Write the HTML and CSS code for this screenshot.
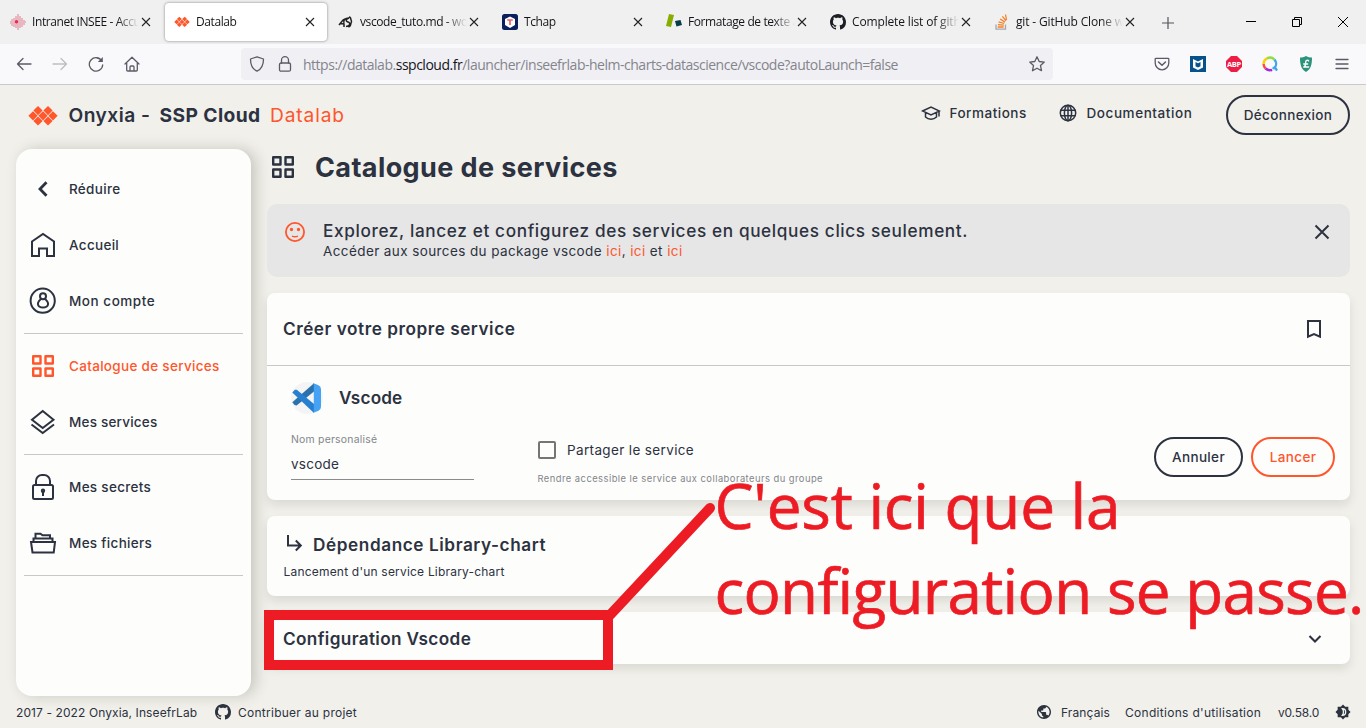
FILE: index.html
```
<!DOCTYPE html>
<html lang="fr">
<head>
<meta charset="utf-8">
<title>Datalab</title>
<link rel="stylesheet" href="styles.css">
</head>
<body>
<svg class="defs" width="0" height="0">
  <symbol id="x" viewBox="0 0 10 10"><path d="M1 1l8 8M9 1l-8 8" fill="none" stroke="#222" stroke-width="1.1"/></symbol>
  <symbol id="onyxia" viewBox="0 0 30 20"><path d="M10 0l4.600 4.600-4.600 4.600-4.600-4.600zM20 0l4.600 4.600-4.600 4.600-4.600-4.600zM5 5.200l4.600 4.600-4.600 4.600-4.600-4.600zM15 5.200l4.600 4.600-4.600 4.600-4.600-4.600zM25 5.200l4.600 4.600-4.600 4.600-4.600-4.600zM10 10.400l4.600 4.600-4.600 4.600-4.600-4.600zM20 10.400l4.600 4.600-4.600 4.600-4.600-4.600z" fill="#ff562c"/></symbol>
  <symbol id="github" viewBox="0 0 16 16"><path fill-rule="evenodd" d="M8 0C3.580 0 0 3.580 0 8c0 3.540 2.290 6.530 5.470 7.590.4.070.55-.17.55-.38 0-.19-.01-.82-.01-1.490-2.010.37-2.530-.49-2.690-.94-.09-.23-.48-.94-.82-1.130-.28-.15-.68-.52-.01-.53.63-.01 1.080.58 1.230.82.72 1.210 1.870.87 2.330.66.07-.52.28-.87.51-1.070-1.780-.2-3.640-.89-3.640-3.950 0-.87.31-1.590.82-2.150-.08-.2-.36-1.020.08-2.120 0 0 .67-.21 2.200.82.64-.18 1.320-.27 2-.27s1.360.09 2 .27c1.530-1.040 2.200-.82 2.200-.82.44 1.100.16 1.920.08 2.120.51.56.82 1.270.82 2.150 0 3.070-1.870 3.750-3.650 3.950.29.25.54.73.54 1.480 0 1.070-.01 1.930-.01 2.200 0 .21.15.46.55.38A8.010 8.010 0 0016 8c0-4.420-3.580-8-8-8z"/></symbol>
  <symbol id="grid" viewBox="0 0 24 24"><path d="M2.200 2.200h7.300v7.300H2.200zM14.500 2.200h7.300v7.300h-7.300zM2.200 14.500h7.300v7.300H2.200zM14.500 14.500h7.300v7.300h-7.300z" fill="none" stroke="currentColor" stroke-width="2.400" stroke-linejoin="round"/></symbol>
</svg>

<header class="tabs">
  <div class="tab">
    <svg class="fav" viewBox="0 0 16 16"><path d="M0 7v3M2 5v7M4 4v9M6 2v12M8 0v16M10 2v12M12 4v9M14 6v5M16 7v2" stroke="#e09aa8" stroke-width="1.300"/><path d="M3 6h10M5 4h6M3 10h10M5 12h6" stroke="#e5b4bf" stroke-width=".7"/><circle cx="6.500" cy="7.700" r="1.700" fill="#f0274a"/></svg>
    <span class="tab-label">Intranet INSEE - Accueil</span><svg class="close"><use href="#x"/></svg>
  </div>
  <div class="tab active">
    <svg class="fav" viewBox="0 0 30 20"><use href="#onyxia"/></svg>
    <span class="tab-label">Datalab</span><svg class="close"><use href="#x"/></svg>
  </div>
  <div class="tab">
    <svg class="fav" viewBox="0 0 16 16"><path d="M1 11l4-5 2-1M2 9.500l4 .5v3M6 9c-1-3 1-5 5-5-3 1-4 3-1 4 3 1 2 4-2 4.500M11 3c3 0 1 4 3 4.500-2 .5 0 5-3.500 5.500" fill="none" stroke="#222" stroke-width="1.500"/></svg>
    <span class="tab-label">vscode_tuto.md - work</span><svg class="close"><use href="#x"/></svg>
  </div>
  <div class="tab">
    <svg class="fav" viewBox="0 0 16 16"><rect width="16" height="16" rx="2.500" fill="#0b1f5c"/><path d="M8 2.500l5 2.500v6l-5 3-5-3V5z" fill="#fff"/><path d="M5.200 6h5.600M8 6v5" stroke="#f0616d" stroke-width="1.700"/></svg>
    <span class="tab-label">Tchap</span><svg class="close"><use href="#x"/></svg>
  </div>
  <div class="tab">
    <svg class="fav" viewBox="0 0 16 16"><path d="M3 0l5 1-3 12-5-1z" fill="#86ad00"/><path d="M9 7l5.500-1L16 11l-5.500 1.500z" fill="#073d48"/></svg>
    <span class="tab-label">Formatage de texte avec</span><svg class="close"><use href="#x"/></svg>
  </div>
  <div class="tab">
    <svg class="fav" viewBox="0 0 16 16" fill="#1b1f24"><use href="#github"/></svg>
    <span class="tab-label tab-wide">Complete list of github</span><svg class="close"><use href="#x"/></svg>
  </div>
  <div class="tab">
    <svg class="fav" viewBox="0 0 16 16" fill="none"><path d="M2 10.500v4.700h9.500v-4.700" stroke="#a3a8ad" stroke-width="1.300"/><path d="M3.700 13h6M3.900 10.600l5.900.6M4.600 7.800l5.600 1.700M6.100 5l4.900 3.100M8.400 2.300l3.600 4.500M11.500.5l1 5.500" stroke="#f48024" stroke-width="1.300"/></svg>
    <span class="tab-label tab-wide">git - GitHub Clone with</span><svg class="close"><use href="#x"/></svg>
  </div>
  <svg class="plus" viewBox="0 0 12 12"><path d="M6 0v12M0 6h12" stroke="#55555c" stroke-width="1.200"/></svg>
  <div class="window">
    <svg viewBox="0 0 10 10"><path d="M0 4.500h10" stroke="#000"/></svg>
    <svg viewBox="0 0 10 10" fill="none" stroke="#000"><path d="M.5 2.500h7v7h-7zM2.500 2.500v-2h7v7h-2"/></svg>
    <svg viewBox="0 0 10 10"><path d="M0 0l10 10M10 0L0 10" stroke="#000"/></svg>
  </div>
</header>

<nav class="toolbar">
  <div class="nav-buttons">
    <svg viewBox="0 0 16 16"><path d="M15 8H1.500M7 2.500L1.500 8 7 13.500"/></svg>
    <svg viewBox="0 0 16 16" class="dim"><path d="M1 8h13.500M9 2.500L14.500 8 9 13.500"/></svg>
    <svg viewBox="0 0 16 16"><path d="M13.800 5A6.700 6.700 0 1 0 14.700 9"/><path d="M14.800 1v5h-5z" fill="#5b5b66" stroke="none"/></svg>
    <svg viewBox="0 0 16 16"><path d="M1 8l7-6.700L15 8M2.700 7v7q0 1 1 1h8.600q1 0 1-1V7M6 15v-4q0-1 1-1h2q1 0 1 1v4"/></svg>
  </div>
  <div class="urlbar">
    <svg viewBox="0 0 16 16"><path d="M8 .8l6.500 2.200c0 5.500-1.500 10-6.500 12.200C3 13 1.500 8.500 1.500 3z"/></svg>
    <svg viewBox="0 0 16 16"><rect x="2.500" y="7" width="11" height="8.200" rx="1.500"/><path d="M4.500 7V4.200a3.500 3.500 0 0 1 7 0V7"/></svg>
    <span class="url">https://datalab.<b>sspcloud.fr</b>/launcher/inseefrlab-helm-charts-datascience/vscode?autoLaunch=false</span>
    <svg class="star" viewBox="0 0 16 16"><path d="M8 .8l2.200 4.700 5.100.6-3.800 3.500 1 5.100L8 12.200l-4.500 2.500 1-5.100L.7 6.100l5.100-.6z"/></svg>
  </div>
  <div class="extensions">
    <svg viewBox="0 0 16 16"><path d="M2 2.300h12q.8 0 .8.800V7A6.800 6.800 0 0 1 1.200 7V3.100q0-.8.800-.8z"/><path d="M4.500 6L8 9.300 11.500 6" stroke-width="1.500"/></svg>
    <svg viewBox="0 0 16 16"><path d="M0 0h16v16H0z" fill="#07528b" stroke="none"/><path d="M3 3l5 2.500L13 3v8.500L8 14l-5-2.500z" fill="#fff" stroke="none"/><path d="M5.500 6L8 7.300 10.500 6v4.300L8 11.500l-2.500-1.200z" fill="#07528b" stroke="none"/></svg>
    <svg viewBox="0 0 16 16"><path d="M5 0h6l5 5v6l-5 5H5l-5-5V5z" fill="#ed1e45" stroke="none"/><text x="8" y="10.700" class="abp">ABP</text></svg>
    <svg viewBox="0 0 16 16"><path d="M1.600 8A6.300 6.300 0 0 1 5 2.400" stroke="#ffce00"/><path d="M5 2.400a6.300 6.300 0 0 1 7.500 1.200" stroke="#8fe03c"/><path d="M12.500 3.600A6.300 6.300 0 0 1 12.500 12M10.500 12l3 .2 1.500 2.500" stroke="#42a5f0"/><path d="M1.600 8a6.300 6.300 0 0 0 2 4.500" stroke="#ff4b38"/><path d="M3.600 12.500a6.300 6.300 0 0 0 6.500 1.300" stroke="#a42bdc"/></svg>
    <svg viewBox="0 0 16 16"><path d="M8 0c2 1.500 4 1.500 6 1.500 0 7-1 11.500-6 14.500-5-3-6-7.500-6-14.500C4 1.500 6 1.500 8 0z" fill="#2b927c" stroke="none"/><path d="M10.700 5c-1-1.500-3-.5-3 1 0 2 .5 4-2 5h5M5.700 8h4" stroke="#fff" stroke-width="1.300"/></svg>
    <svg viewBox="0 0 16 16"><path d="M2 3.500h12M2 8h12M2 12.500h12"/></svg>
  </div>
</nav>

<div class="app">
  <header class="app-header">
    <svg class="logo" viewBox="0 0 30 20"><use href="#onyxia"/></svg>
    <div class="brand"><span class="b-onyxia">Onyxia -</span><strong>SSP Cloud</strong><span class="b-datalab">Datalab</span></div>
    <a class="head-link formations"><svg viewBox="0 0 20 20"><path d="M1.500 8L10 4l8.500 4L10 12zM4.500 9.500v4.500c3 3 8 3 11 0V9.500M18 8v5.500"/></svg>Formations</a>
    <a class="head-link docs"><svg viewBox="0 0 20 20"><circle cx="10" cy="10" r="7.700"/><ellipse cx="10" cy="10" rx="3.600" ry="7.700"/><path d="M2.800 7.300h14.400M2.800 12.700h14.400M10 2.300v15.400"/></svg>Documentation</a>
    <button class="btn logout">Déconnexion</button>
  </header>

  <div class="body">
    <aside class="sidebar">
      <a class="item"><svg viewBox="0 0 28 28"><path d="M17.500 7.200L11 14l6.500 6.800" stroke-width="2.800"/></svg><span>Réduire</span></a>
      <a class="item"><svg viewBox="0 0 28 28"><path d="M3 10.500L14 3l11 7.500V25h-7v-7.500h-8V25H3z"/></svg><span>Accueil</span></a>
      <a class="item"><svg viewBox="0 0 28 28"><circle cx="13.700" cy="13.700" r="12.100"/><circle cx="14" cy="9.300" r="3"/><path d="M12 12c-5 4-3.500 8.500 2 8.500s7-4.500 2-8.500"/></svg><span class="ls-compte">Mon compte</span></a>
      <hr>
      <a class="item current"><svg viewBox="0 0 28 28"><use href="#grid" x="2" y="2" width="24" height="24"/></svg><span>Catalogue de services</span></a>
      <a class="item"><svg viewBox="0 0 28 28"><path d="M13.700 3l10.800 8.700-10.800 8.300-10.700-8.300zM2.500 16.500L13.700 25l11.300-8.500"/></svg><span class="ls-services">Mes services</span></a>
      <hr>
      <a class="item"><svg viewBox="0 0 28 28"><rect x="4" y="12" width="20" height="14" rx="1.500"/><path d="M7 12V8a6 6 0 0 1 6-6h2a6 6 0 0 1 6 6v4M14 18v5"/><circle cx="14" cy="17.700" r="1.200"/></svg><span>Mes secrets</span></a>
      <a class="item"><svg viewBox="0 0 28 28"><path d="M2 13h24l-1.300 10.500H3.500zM4.500 13V9.500h19V13M6.500 9.500V4.700h5l2 1.500h7.500v3.300"/></svg><span>Mes fichiers</span></a>
      <hr>
    </aside>

    <main class="content">
      <h1><svg viewBox="0 0 24 24"><use href="#grid"/></svg><span>Catalogue de services</span></h1>

      <section class="notice">
        <svg class="smile" viewBox="0 0 24 24"><circle cx="12" cy="12" r="9.100"/><path d="M9 16.100q3 1.300 6 0" stroke-width="1.400"/><circle cx="8.500" cy="9.500" r=".8" fill="#ff562c"/><circle cx="15.500" cy="9.500" r=".8" fill="#ff562c"/></svg>
        <div class="notice-text">
          <h2>Explorez, lancez et configurez des services en quelques clics seulement.</h2>
          <p>Accéder aux sources du package vscode <a>ici</a>, <a>ici</a> et <a>ici</a></p>
        </div>
        <svg class="dismiss" viewBox="0 0 24 24"><path d="M5.500 5.500l13 13M18.500 5.500l-13 13"/></svg>
      </section>

      <section class="card">
        <div class="card-head"><h3>Créer votre propre service</h3><svg viewBox="0 0 24 24"><path d="M6 4h12v15.700l-6-2.600-6 2.600z"/></svg></div>
        <div class="card-body">
          <div class="service">
            <svg viewBox="0 0 32 32"><circle cx="16" cy="16" r="16" fill="#f4f4f5"/><path d="M1.300 20.300l2.300 2.800 2 .3L23 9.500V1.200z" fill="#2a71ae"/><path d="M1.300 10.500l2.500-2.700 2-.1L23 22V31z" fill="#2680cf"/><path d="M22 1.100l5.500 2.200q2.500 1 2.500 4v17.500q0 2.800-2.500 4L22 31q.8-.8.8-2V3.500q0-1.400-.8-2.400z" fill="#45a2f5"/></svg>
            <h3>Vscode</h3>
          </div>
          <div class="form">
            <label class="field"><span>Nom personalisé</span><b>vscode</b></label>
            <div class="share">
              <div class="check"><i></i><span>Partager le service</span></div>
              <small>Rendre accessible le service aux collaborateurs du groupe</small>
            </div>
            <div class="actions"><button class="btn cancel">Annuler</button><button class="btn launch">Lancer</button></div>
          </div>
        </div>
      </section>

      <section class="card dependency">
        <h3><svg viewBox="0 0 20 20"><path d="M4 2v10.500h12M11.800 7.500l5 5-5 5"/></svg><span>Dépendance Library-chart</span></h3>
        <p>Lancement d'un service Library-chart</p>
      </section>

      <section class="card config">
        <h3>Configuration Vscode</h3>
        <svg viewBox="0 0 20 20"><path d="M4.500 7l5.500 5.500L15.500 7"/></svg>
      </section>
    </main>
  </div>

  <footer class="footer">
    <span class="copyright">2017 - 2022 Onyxia, InseefrLab</span>
    <svg class="gh" viewBox="0 0 16 16" fill="#2c323f"><use href="#github"/></svg>
    <span class="contribute">Contribuer au projet</span>
    <svg class="world" viewBox="2 2 20 20"><path fill="#2c323f" d="M12 2C6.480 2 2 6.480 2 12s4.480 10 10 10 10-4.480 10-10S17.520 2 12 2zm-1 17.930c-3.950-.49-7-3.850-7-7.930 0-.62.080-1.210.21-1.790L9 15v1c0 1.100.9 2 2 2v1.930zm6.900-2.540c-.26-.81-1-1.390-1.900-1.390h-1v-3c0-.55-.45-1-1-1H8v-2h2c.55 0 1-.45 1-1V7h2c1.100 0 2-.9 2-2v-.41c2.930 1.190 5 4.060 5 7.410 0 2.080-.8 3.970-2.100 5.390z"/></svg>
    <span class="lang">Français</span>
    <span class="terms">Conditions d'utilisation</span>
    <span class="version">v0.58.0</span>
    <svg class="dark" viewBox="0 0 24 24"><path fill="#2c323f" d="M20 8.690V4h-4.690L12 .69 8.690 4H4v4.690L.69 12 4 15.310V20h4.690L12 23.310 15.310 20H20v-4.690L23.310 12 20 8.690z"/><path fill="none" stroke="#f1f0eb" stroke-width="2" d="M11 7a5 5 0 1 1 0 10q3.500-5 0-10z"/></svg>
  </footer>
</div>

<svg class="callout" width="455" height="170" viewBox="0 0 455 170"><rect x="5" y="115" width="339" height="50"/><path d="M346 115L446 8"/></svg>
<div class="annotation"><div>C'est ici que la</div><div class="second">configuration se passe.</div></div>
</body>
</html>
```
FILE: styles.css
```
* { box-sizing: border-box; }
body { margin: 0; width: 1366px; height: 728px; overflow: hidden; position: relative; background: #f1f0eb; color: #2c323f; font-family: Inter, sans-serif; }
h1, h2, h3, p { margin: 0; }
svg { display: block; flex: none; }
.defs { position: absolute; }

/* Browser chrome */
.tabs { height: 44px; background: #f0f0f0; display: flex; align-items: flex-start; padding: 3px 0 0 1px; gap: 2px; font: 12px/20px "Open Sans", sans-serif; color: #15141a; }
.tab { width: 162px; height: 38px; border-radius: 4px; display: flex; align-items: center; padding: 0 11px 0 9px; }
.tab.active { background: #fff; box-shadow: 0 0 3px #80808e; }
.fav { width: 16px; height: 16px; margin-right: 6px; }
.tab-label { flex: none; width: 109px; overflow: hidden; white-space: nowrap; letter-spacing: -.4px; mask-image: linear-gradient(to right, #000 78%, transparent 98%); }
.tab-wide { letter-spacing: -.15px; }
.close { width: 10px; height: 10px; }
.plus { width: 12px; height: 12px; margin: 14px 0 0 13px; }
.window { display: flex; gap: 36px; margin: 14px 0 0 70px; }
.window svg { width: 10px; height: 10px; }
.toolbar { height: 41px; background: #f9f9fb; border-bottom: 1px solid #c9c9cf; display: flex; align-items: center; }
.toolbar svg { width: 16px; height: 16px; fill: none; stroke: #5b5b66; stroke-width: 1.3; stroke-linejoin: round; stroke-linecap: round; }
.nav-buttons { display: flex; gap: 20px; padding-left: 16px; width: 241px; }
.nav-buttons .dim { stroke: #bdbdc3; }
.urlbar { width: 812px; height: 32px; border-radius: 4px; background: #f0f0f4; display: flex; align-items: center; padding: 0 8px; }
.urlbar svg + svg { margin-left: 12px; }
.url { font: 14px/20px "Open Sans", sans-serif; letter-spacing: -.484px; color: #84848c; margin: 2px 0 0 10px; flex: 1; white-space: nowrap; }
.url b { font-weight: 400; color: #15141a; }
.extensions { display: flex; gap: 20px; margin-left: 101px; }
.extensions svg:nth-child(4) { stroke-width: 2.4; stroke-linecap: butt; }
.abp { font: 700 7.5px "Open Sans", sans-serif; fill: #fff; stroke: none; text-anchor: middle; letter-spacing: -.3px; }

/* Application header */
.app-header { height: 64px; display: flex; padding: 0 16px 0 27.5px; }
.logo { width: 30px; height: 20px; margin-top: 21px; }
.brand { width: 860.5px; margin: 18px 0 0 11px; display: flex; font-size: 19.2px; line-height: 24px; white-space: nowrap; }
.b-onyxia { font-weight: 600; letter-spacing: .47px; width: 91px; }
.brand strong { font-weight: 700; letter-spacing: .42px; width: 110.5px; }
.b-datalab { color: #ff562c; letter-spacing: .85px; }
.head-link { display: flex; align-items: center; height: 20px; margin-top: 18px; font-size: 13.5px; font-weight: 500; letter-spacing: .5px; }
.formations { margin-left: -8px; width: 137px; }
.docs { width: 168px; letter-spacing: .57px; }
.head-link svg { width: 20px; height: 20px; fill: none; stroke: #2c323f; stroke-width: 1.5; margin-right: 8.5px; }
.btn { height: 40px; border: 2px solid #2c323f; border-radius: 20px; background: transparent; color: #2c323f; font: 500 13.5px Inter, sans-serif; letter-spacing: .35px; padding: 0; }
.logout { width: 124px; margin-top: 10px; }

/* Sidebar */
.body { display: flex; gap: 16px; padding-left: 16px; height: 547px; }
.sidebar { width: 235px; height: 547px; border-radius: 16px; background: #fdfdfc; padding: 12px 8px; box-shadow: 5px 0 14px rgba(70, 70, 50, .24); }
.item { height: 56px; display: flex; align-items: center; padding-left: 5px; font-size: 13.5px; font-weight: 500; letter-spacing: .31px; white-space: nowrap; }
.item svg { width: 28px; height: 28px; margin-right: 12px; fill: none; stroke: currentColor; stroke-width: 2; }
.item .ls-compte { letter-spacing: .53px; }
.item .ls-services { letter-spacing: .21px; }
.current { color: #ff562c; }
.sidebar hr { margin: 4px 0; border: 0; height: 1px; background: #c8c8c8; }

/* Content */
.content { width: 1083px; display: flex; flex-direction: column; gap: 16px; }
h1 { height: 39px; display: flex; align-items: center; font-size: 27px; font-weight: 700; letter-spacing: .4px; padding: 0 0 2px 4px; }
h1 svg { width: 24px; height: 24px; margin: 0 20px 2px 0; }
.notice { height: 73px; border-radius: 10px; background: #e6e6e6; display: flex; padding: 15px 16px; }
.smile { width: 24px; height: 24px; margin-top: 1px; fill: none; stroke: #ff562c; stroke-width: 1.8; }
.notice-text { flex: 1; margin-left: 16px; }
h2 { font-size: 17.2px; line-height: 24px; font-weight: 500; letter-spacing: .63px; white-space: nowrap; }
.notice p { font-size: 13.5px; line-height: 18px; letter-spacing: .4px; margin-top: -1px; }
.notice a { color: #ff562c; }
.dismiss { width: 24px; height: 24px; margin-top: 1px; fill: none; stroke: #2c323f; stroke-width: 2; }
.card { background: #fdfdfc; border-radius: 8px; box-shadow: 0 5px 10px rgba(70, 70, 50, .13); }
h3 { font-size: 17.2px; line-height: 24px; font-weight: 600; letter-spacing: .53px; }
.card-head { height: 73px; border-bottom: 1px solid #c8c8c8; display: flex; justify-content: space-between; align-items: center; padding: 0 24px 0 16px; }
.card-head svg { width: 24px; height: 24px; fill: none; stroke: #2c323f; stroke-width: 2; }
.card-body { height: 134px; padding: 16px 16px 0 24px; }
.service { height: 32px; display: flex; align-items: center; gap: 16px; }
.service svg { width: 32px; height: 32px; }
.service h3 { letter-spacing: .15px; }
.form { display: flex; }
.field { width: 183px; height: 66px; border-bottom: 1px solid #8b8b8b; display: flex; flex-direction: column; padding-top: 18px; }
.field span { font-size: 10.4px; line-height: 16px; letter-spacing: .24px; color: #83858a; }
.field b { font-size: 13.5px; line-height: 20px; margin-top: 6px; font-weight: 400; letter-spacing: .25px; }
.share { margin: 25px 0 0 63px; flex: 1; }
.check { display: flex; align-items: center; height: 22px; font-size: 13.5px; letter-spacing: .36px; }
.check i { width: 18px; height: 18px; border: 2px solid #757575; border-radius: 2px; margin: 0 11px 0 1px; }
.share small { display: block; margin: 10px 0 0 .5px; font-size: 9.4px; line-height: 16px; letter-spacing: .46px; color: #83858a; }
.actions { display: flex; gap: 8px; margin: 23px -1px 0 0; }
.cancel { width: 89px; }
.launch { width: 84px; color: #ff562c; border-color: #ff562c; }
.dependency { height: 80px; padding: 17px; }
.dependency h3 { display: flex; letter-spacing: .58px; }
.dependency h3 svg { width: 20px; height: 20px; margin-right: 9px; fill: none; stroke: #2c323f; stroke-width: 2; }
.dependency p { font-size: 12px; line-height: 18px; letter-spacing: .2px; margin: 6px 0 0 -.5px; }
.config { height: 52px; display: flex; align-items: center; justify-content: space-between; padding: 1px 25px 0 16px; }
.config h3 { letter-spacing: .35px; }
.config svg { width: 20px; height: 20px; fill: none; stroke: #2c323f; stroke-width: 2.1; }

/* Footer */
.footer { height: 32px; display: flex; align-items: center; padding-left: 16px; font-size: 12px; letter-spacing: .26px; white-space: nowrap; }
.copyright { width: 199px; letter-spacing: .1px; }
.gh { width: 16px; height: 16px; margin-right: 7px; }
.contribute { width: 799px; }
.world { width: 14px; height: 14px; margin-right: 10px; }
.lang { width: 64px; letter-spacing: .12px; }
.terms { width: 153px; letter-spacing: .3px; }
.version { width: 57px; letter-spacing: -.2px; }
.dark { width: 16px; height: 16px; }

/* Drawn annotation over the page */
.callout { position: absolute; left: 264px; top: 500px; fill: none; stroke: #ed1c24; stroke-width: 10; stroke-linecap: round; }
.annotation { position: absolute; left: 714.5px; top: 463px; font: 62px/85px "Open Sans", sans-serif; color: #ed1c24; -webkit-text-stroke: .7px #ed1c24; letter-spacing: -.22px; white-space: nowrap; }
.annotation .second { letter-spacing: -.7px; }
```
